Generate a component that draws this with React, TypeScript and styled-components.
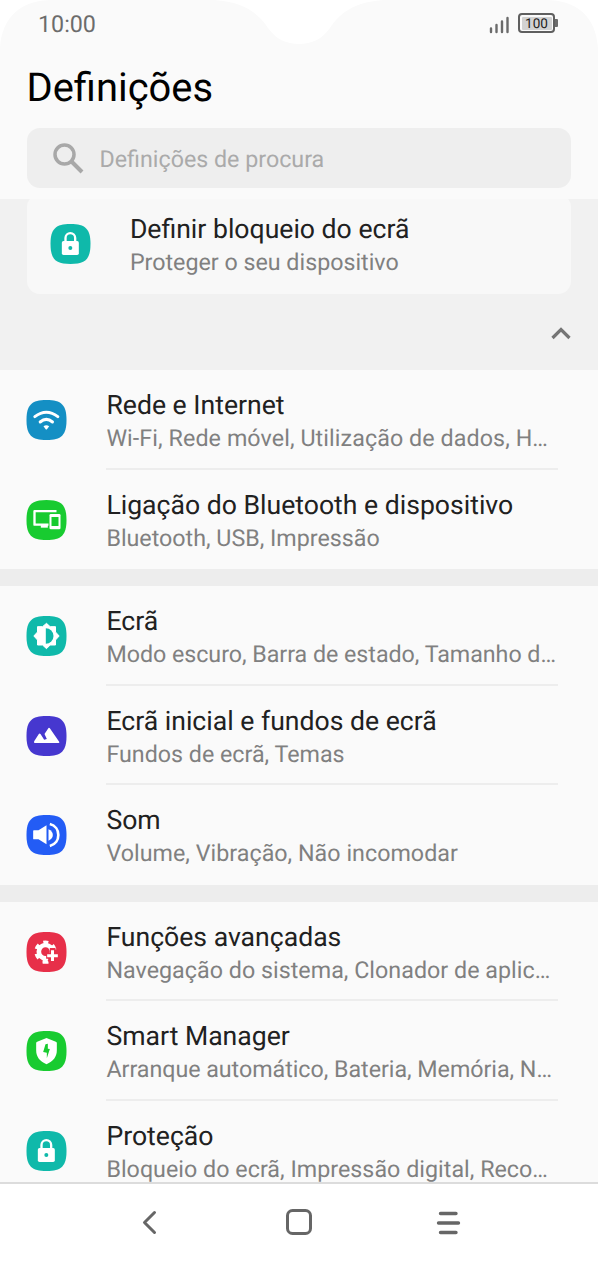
import React from "react";
import styled, { createGlobalStyle } from "styled-components";

const GlobalStyle = createGlobalStyle`
  * { box-sizing: border-box; }
  body {
    margin: 0;
    background: #fff;
    font-family: Roboto, "Liberation Sans", sans-serif;
    text-rendering: geometricPrecision;
  }
`;

const Phone = styled.div`
  position: relative;
  display: flex;
  flex-direction: column;
  width: 598px;
  height: 1262px;
  overflow: hidden;
  background: #fafafa;
`;

const Cutout = styled.svg`
  position: absolute;
  top: 0;
  left: 0;
  display: block;
`;

const Header = styled.header`
  flex: none;
  height: 199px;
  padding: 0 27px 0 26.5px;
  background: #fafafa;
`;

const StatusBar = styled.div`
  display: flex;
  justify-content: space-between;
  height: 48px;
  padding: 0 13px 0 11.5px;
`;

const Clock = styled.span`
  font-size: 23.25px;
  line-height: 49px;
  color: #6c6c6c;
`;

const StatusIcons = styled.div`
  display: flex;
  gap: 9px;
  padding-top: 13px;
`;

const Battery = styled.div`
  display: flex;
  align-items: center;
  height: 20px;

  &::after {
    content: "";
    width: 3px;
    height: 8px;
    border-radius: 0 1px 1px 0;
    background: #6b6b6b;
  }
`;

const BatteryBody = styled.div`
  width: 37px;
  height: 20px;
  padding: 1.5px;
  border: 2px solid #5f5f5f;
  border-radius: 4px;
`;

const BatteryLevel = styled.div`
  height: 13px;
  border-radius: 1px;
  background: #d2d2d2;
  color: #222;
  font-size: 13.5px;
  line-height: 14px;
  text-align: center;
`;

const Title = styled.h1`
  margin: 0;
  font-size: 39.9px;
  font-weight: 400;
  line-height: 80px;
  color: #000;
`;

const Search = styled.div`
  display: flex;
  align-items: center;
  height: 60px;
  padding-left: 26px;
  border-radius: 13px;
  background: #eee;
  color: #aaa;
  font-size: 23.25px;
`;

const SearchText = styled.span`
  padding-top: 2px;
`;

const SearchIcon = styled.svg`
  width: 31px;
  height: 31px;
  margin-right: 16px;
`;

const Suggestions = styled.section`
  flex: none;
  height: 171px;
  padding: 0 27px 0 26.5px;
  overflow: hidden;
  background: #f1f1f1;
`;

const Card = styled.div`
  display: flex;
  height: 100px;
  margin-top: -5px;
  padding: 0 23px;
  border-radius: 13px;
  background: #f8f8f8;
`;

const Collapse = styled.div`
  display: flex;
  justify-content: flex-end;
  padding-top: 32px;
`;

const List = styled.main`
  flex: 1;
  min-height: 0;
  overflow: hidden;
  background: #ededed;
`;

const Group = styled.section`
  background: #fafafa;
  margin-bottom: 16.6px;
`;

const Row = styled.div`
  display: flex;
  height: 99.7px;
  padding-left: 26px;
`;

const Tile = styled.svg`
  flex: none;
  width: 40px;
  height: 40px;
  margin: 30px 40.4px 0 0;
  overflow: visible;
`;

const Texts = styled.div<{ $divider?: boolean }>`
  width: 451.5px;
  padding-top: 18px;
  border-bottom: ${(p) => (p.$divider ? "2px solid #ededed" : "none")};
`;

const Label = styled.div`
  font-size: 26.6px;
  line-height: 35px;
  color: #212121;
  white-space: nowrap;
`;

const Summary = styled.div<{ $tracking?: number }>`
  font-size: 23.25px;
  line-height: 31px;
  letter-spacing: ${(p) => (p.$tracking ? `${p.$tracking}px` : "normal")};
  color: #808080;
  white-space: nowrap;
`;

const NavBar = styled.nav`
  display: flex;
  flex: none;
  align-items: center;
  justify-content: space-around;
  height: 80px;
  padding: 0 75px 2px;
  border-top: 2px solid #dcdcdc;
  background: #fff;
`;

const glyphs = {
  lock: (c: string) => (
    <>
      <path d="M45 54V42a14.500 14.500 0 0 1 29 0V54" fill="none" stroke="#fff" strokeWidth="7" />
      <rect x="34" y="51" width="51" height="42" rx="5" fill="#fff" />
      <circle cx="59.500" cy="72" r="6" fill={c} />
    </>
  ),
  wifi: () => (
    <g fill="none" stroke="#fff" strokeWidth="9">
      <path d="M25 50Q59.500 24 94 50M41 66Q59.500 50 78 66" strokeLinecap="round" />
      <path d="M51 79Q59.500 72 68 79L62 87Q59.500 90 57 87Z" fill="#fff" stroke="none" />
    </g>
  ),
  devices: (c: string) => (
    <>
      <path d="M90 33.500H24V74H66" fill="none" stroke="#fff" strokeWidth="7" strokeLinejoin="round" />
      <path d="M43 74H64V83H43Z" fill="#fff" />
      <rect x="69" y="42" width="33" height="46" rx="4" fill="#fff" />
      <rect x="75" y="51" width="21" height="27" fill={c} />
    </>
  ),
  display: (c: string) => (
    <>
      <path
        d="M60 22L71 32H87V48L98 60L87 72V87H71L60 98L48 87H33V72L22 60L33 48V32H48Z"
        fill="#fff"
        stroke="#fff"
        strokeWidth="3"
        strokeLinejoin="round"
      />
      <path d="M58 37A23 23 0 0 1 58 83Z" fill={c} />
    </>
  ),
  wallpaper: () => (
    <path
      d="M23 76L37 54Q39 51 42 54L53 71L61 69L54 54L66 36Q68 34 70 37L98 77Q100 81 96 81H25Q21 81 23 76Z"
      fill="#fff"
    />
  ),
  sound: () => (
    <>
      <path d="M20 48Q20 46 22 46H36L60 31V88L36 73H22Q20 73 20 71Z" fill="#fff" />
      <path d="M66 43Q79 49 79 60T66 77Z" fill="#fff" />
      <path d="M70 27C104 36 104 84 70 93" fill="none" stroke="#fff" strokeWidth="8" />
    </>
  ),
  advanced: (c: string) => (
    <>
      <circle cx="57" cy="59" r="20" fill="none" stroke="#fff" strokeWidth="14" />
      <circle cx="57" cy="59" r="28" fill="none" stroke="#fff" strokeWidth="11" strokeDasharray="14.660 14.660" strokeDashoffset="-7.330" />
      <path d="M59 62H70V48H87V62H102V96H65V80H59Z" fill={c} />
      <path d="M78 55V87M62 71H94" stroke="#fff" strokeWidth="9" />
      <path d="M52 80V92H66" fill="none" stroke="#fff" strokeWidth="7" />
    </>
  ),
  shield: (c: string) => (
    <>
      <path d="M60 21L88 32Q91 33 91 36V58C91 78 80 91 60 100C40 91 29 78 29 58V36Q29 33 32 32Z" fill="#fff" />
      <path d="M57 40L64 38V53L70 54L61 82V65L50 63Z" fill={c} />
    </>
  ),
};

type Glyph = keyof typeof glyphs;

function Icon({ glyph, color }: { glyph: Glyph; color: string }) {
  return (
    <Tile viewBox="-1.500 0 120 120">
      <path d="M60 0C105 0 120 15 120 60S105 120 60 120 0 105 0 60 15 0 60 0Z" fill={color} />
      {glyphs[glyph](color)}
    </Tile>
  );
}

type Item = { glyph: Glyph; color: string; label: string; summary: string; tracking?: number };

const groups: Item[][] = [
  [
    { glyph: "wifi", color: "#148fc4", label: "Rede e Internet", summary: "Wi-Fi, Rede móvel, Utilização de dados, H…", tracking: 0.09 },
    { glyph: "devices", color: "#18cb30", label: "Ligação do Bluetooth e dispositivo", summary: "Bluetooth, USB, Impressão" },
  ],
  [
    { glyph: "display", color: "#0fb9aa", label: "Ecrã", summary: "Modo escuro, Barra de estado, Tamanho d…", tracking: -0.03 },
    { glyph: "wallpaper", color: "#4637cf", label: "Ecrã inicial e fundos de ecrã", summary: "Fundos de ecrã, Temas" },
    { glyph: "sound", color: "#235cf5", label: "Som", summary: "Volume, Vibração, Não incomodar", tracking: 0.03 },
  ],
  [
    { glyph: "advanced", color: "#e72f49", label: "Funções avançadas", summary: "Navegação do sistema, Clonador de aplic…", tracking: 0.03 },
    { glyph: "shield", color: "#18cb30", label: "Smart Manager", summary: "Arranque automático, Bateria, Memória, N…", tracking: -0.03 },
    { glyph: "lock", color: "#0fb9aa", label: "Proteção", summary: "Bloqueio do ecrã, Impressão digital, Reco…", tracking: 0.03 },
  ],
];

export default function App() {
  return (
    <Phone>
      <GlobalStyle />
      <Header>
        <StatusBar>
          <Clock>10:00</Clock>
          <StatusIcons>
            <svg width="20" height="21" viewBox="0 0 20 21" stroke="#6b6b6b" strokeWidth="2.400" strokeLinecap="round">
              <path d="M2 15.500V19M7.500 12V19M13 8.500V19M18.500 5V19" />
            </svg>
            <Battery>
              <BatteryBody>
                <BatteryLevel>100</BatteryLevel>
              </BatteryBody>
            </Battery>
          </StatusIcons>
        </StatusBar>
        <Title>Definições</Title>
        <Search>
          <SearchIcon viewBox="0 0 31 31" fill="none" stroke="#a8a8a8" strokeWidth="3.500">
            <circle cx="11.500" cy="11.500" r="9.500" />
            <path d="M18 18L29 29" strokeWidth="4" />
          </SearchIcon>
          <SearchText>Definições de procura</SearchText>
        </Search>
      </Header>
      <Suggestions>
        <Card>
          <Icon glyph="lock" color="#0fb9aa" />
          <Texts>
            <Label>Definir bloqueio do ecrã</Label>
            <Summary>Proteger o seu dispositivo</Summary>
          </Texts>
        </Card>
        <Collapse>
          <svg width="20" height="14" viewBox="0 0 20 14" fill="none" stroke="#757575" strokeWidth="3.200">
            <path d="M1.500 12L10 3.500L18.500 12" />
          </svg>
        </Collapse>
      </Suggestions>
      <List>
        {groups.map((items, g) => (
          <Group key={g}>
            {items.map((item, i) => (
              <Row key={item.label}>
                <Icon glyph={item.glyph} color={item.color} />
                <Texts $divider={i < items.length - 1}>
                  <Label>{item.label}</Label>
                  <Summary $tracking={item.tracking}>{item.summary}</Summary>
                </Texts>
              </Row>
            ))}
          </Group>
        ))}
      </List>
      <NavBar>
        <svg width="26" height="28" viewBox="0 0 26 28" fill="none" stroke="#666" strokeWidth="3" strokeLinecap="round" strokeLinejoin="round">
          <path d="M17.500 4.500L7.500 14.500L17.500 24.500" />
        </svg>
        <svg width="26" height="26" viewBox="0 0 26 26" fill="none" stroke="#666" strokeWidth="3">
          <rect x="1.500" y="1.500" width="23" height="23" rx="5" />
        </svg>
        <svg width="26" height="28" viewBox="0 0 26 28" stroke="#666" strokeWidth="3.400" strokeLinecap="round">
          <path d="M5.500 5.500H21M3.500 15H23.500M5.500 24.500H21" />
        </svg>
      </NavBar>
      <Cutout width="598" height="50" viewBox="0 0 598 50" fill="#fff">
        <path d="M0 0H52C22 0 2 16 0 48ZM598 0H546C576 0 596 16 598 48Z" />
        <path d="M214 0C244 2 258 13 268 28C276 39 286 44 299 44C312 44 322 39 330 28C340 13 354 2 384 0Z" />
      </Cutout>
    </Phone>
  );
}
